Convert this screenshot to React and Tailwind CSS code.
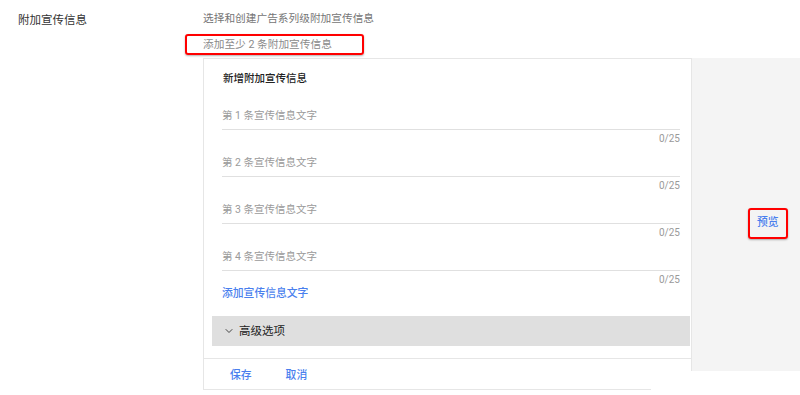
import { ChevronDown } from "lucide-react";

const fields = [1, 2, 3, 4];

const App = () => {
  return (
    <div
      className="relative h-[395px] w-[800px] overflow-hidden bg-white"
      style={{ fontFamily: "Roboto, 'Noto Sans CJK SC', sans-serif" }}
    >
      <div className="flex">
        {/* Left label */}
        <div className="w-[203px] shrink-0 pl-[18px] pt-[12px] text-[11.5px] leading-[16px] text-[#333]">
          附加宣传信息
        </div>

        {/* Right content */}
        <div className="flex flex-1 flex-col">
          <div className="pt-[11px] text-[10.7px] leading-[16px] text-[#757575]">
            选择和创建广告系列级附加宣传信息
          </div>
          <div className="relative mt-[10px] text-[10.7px] leading-[16px] text-[#8a8a8a]">
            添加至少 2 条附加宣传信息
            <div className="absolute left-[-18px] top-[-3px] h-[21px] w-[179px] rounded-[3px] border-2 border-[#f00] shadow-[0_1px_2px_rgba(0,0,0,0.3)]" />
          </div>

          <div className="mt-[5px] flex items-start">
            {/* Card */}
            <div className="w-[488px] shrink-0">
              <div className="h-[300px] border-l border-t border-[#e6e6e6]">
                <div className="pl-[19px] pt-[12px] text-[10.5px] font-medium leading-[16px] text-[#222]">
                  新增附加宣传信息
                </div>
                <div className="pl-[18px] pr-[11px]">
                  {fields.map((n, i) => (
                    <div key={n} className={i === 0 ? "mt-[21px]" : "mt-[10px]"}>
                      <div className="text-[10.5px] leading-[16px] text-[#9a9a9a]">
                        第 {n} 条宣传信息文字
                      </div>
                      <div className="mt-[5px] h-px bg-[#e0e0e0]" />
                      <div className="mt-[3px] text-right text-[10px] leading-[12px] text-[#9a9a9a]">
                        0/25
                      </div>
                    </div>
                  ))}
                  <div className="text-[10.8px] font-medium leading-[16px] text-[#4a7fee]">
                    添加宣传信息文字
                  </div>
                </div>
                <div className="ml-[8px] mr-[1px] mt-[14px] flex h-[30px] items-center bg-[#dfdfdf] pl-[11px]">
                  <ChevronDown size={12} strokeWidth={2} className="text-[#444]" />
                  <span className="ml-[4px] text-[11.5px] leading-[16px] text-[#222]">
                    高级选项
                  </span>
                </div>
              </div>

              {/* Footer */}
              <div className="border-l border-t border-[#e6e6e6]">
                <div className="flex h-[30px] gap-[34px] pl-[26px] pt-[9px] text-[10.8px] font-medium leading-[16px] text-[#4a7fee]">
                  <span>保存</span>
                  <span>取消</span>
                </div>
                <div className="h-px w-[447px] bg-[#e6e6e6]" />
              </div>
            </div>

            {/* Preview panel */}
            <div className="h-[313px] flex-1 border-l border-[#e6e6e6] bg-[#f4f4f4] pl-[65px] pt-[151px]">
              <span className="relative text-[10.8px] font-medium leading-[16px] text-[#4a7fee]">
                预览
                <span className="absolute left-[-9px] top-[-8px] h-[31px] w-[40px] rounded-[3px] border-2 border-[#f00] shadow-[0_1px_2px_rgba(0,0,0,0.3)]" />
              </span>
            </div>
          </div>
        </div>
      </div>
    </div>
  );
};

export default App;
